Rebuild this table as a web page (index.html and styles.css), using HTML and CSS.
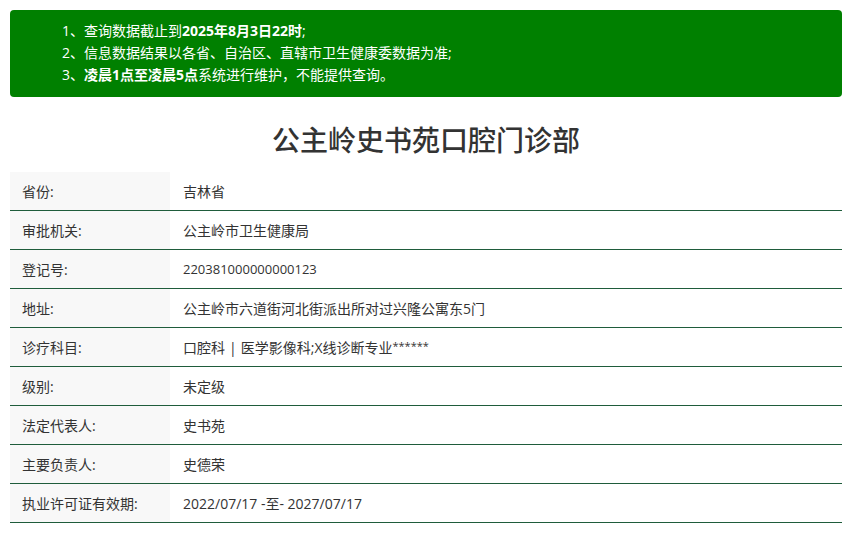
FILE: index.html
```html
<!DOCTYPE html>
<html lang="zh-CN">
<head>
<meta charset="utf-8">
<title>公主岭史书苑口腔门诊部</title>
<link rel="stylesheet" href="styles.css">
</head>
<body>
<div class="page">
  <div class="notice">
    <p>1、查询数据截止到<b>2025年8月3日22时</b>;</p>
    <p>2、信息数据结果以各省、自治区、直辖市卫生健康委数据为准;</p>
    <p>3、<b>凌晨1点至凌晨5点</b>系统进行维护，不能提供查询。</p>
  </div>
  <h1 class="title">公主岭史书苑口腔门诊部</h1>
  <div class="table">
    <div class="row"><div class="label">省份:</div><div class="value">吉林省</div></div>
    <div class="row"><div class="label">审批机关:</div><div class="value">公主岭市卫生健康局</div></div>
    <div class="row"><div class="label">登记号:</div><div class="value"><span class="num">220381000000000123</span></div></div>
    <div class="row"><div class="label">地址:</div><div class="value">公主岭市六道街河北街派出所对过兴隆公寓东5门</div></div>
    <div class="row"><div class="label">诊疗科目:</div><div class="value">口腔科<span class="sep">|</span>医学影像科;X线诊断专业<span class="mask">******</span></div></div>
    <div class="row"><div class="label">级别:</div><div class="value">未定级</div></div>
    <div class="row"><div class="label">法定代表人:</div><div class="value">史书苑</div></div>
    <div class="row"><div class="label">主要负责人:</div><div class="value">史德荣</div></div>
    <div class="row"><div class="label">执业许可证有效期:</div><div class="value">2022/07/17 -至- 2027/07/17</div></div>
  </div>
</div>
</body>
</html>
```
FILE: styles.css
```css
html, body {
  margin: 0;
  padding: 0;
  background: #fff;
}
body {
  font-family: "Open Sans", "Noto Sans CJK SC", sans-serif;
  font-size: 14px;
  color: #333;
}
.page {
  padding: 10px 9px 10px 10px;
}
.notice {
  background: #008000;
  color: #fff;
  border-radius: 4px;
  padding: 10px 0 11px 52px;
  height: 66px;
}
.notice p {
  margin: 0;
  line-height: 22px;
  font-size: 14px;
}
.notice b {
  font-weight: 700;
}
.title {
  margin: 22px 0 11px;
  text-align: center;
  font-size: 28px;
  line-height: 42px;
  font-weight: 500;
  color: #333;
}
.table {
  display: flex;
  flex-direction: column;
}
.row {
  display: flex;
  height: 38px;
  align-items: stretch;
  border-bottom: 1px solid #1f5c3b;
}
.label {
  width: 160px;
  flex: none;
  background: #f8f8f8;
  padding-left: 12px;
  box-sizing: border-box;
  display: flex;
  align-items: center;
  font-size: 14px;
}
.value {
  padding-left: 13px;
  display: flex;
  align-items: center;
  font-size: 14px;
  white-space: pre;
}
.num {
  font-size: 13px;
}
.sep {
  margin: 0 4px;
}
.mask {
  font-size: 11px;
  align-self: center;
  margin-top: -3px;
}
```
